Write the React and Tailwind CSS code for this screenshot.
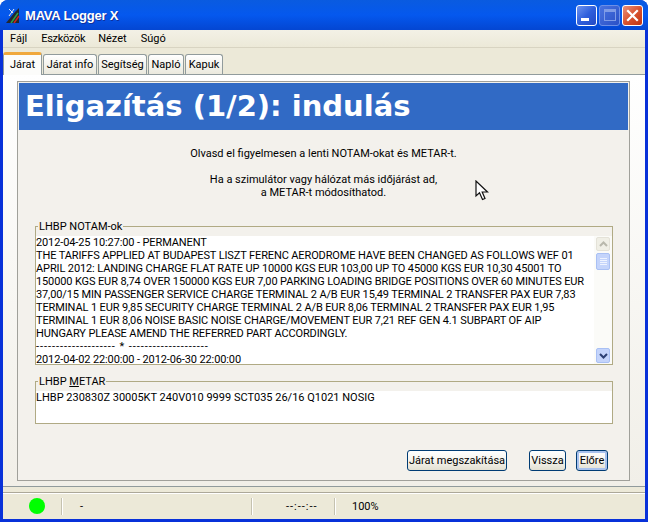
import React from 'react';

const notam = [
  '2012-04-25 10:27:00 - PERMANENT',
  'THE TARIFFS APPLIED AT BUDAPEST LISZT FERENC AERODROME HAVE BEEN CHANGED AS FOLLOWS WEF 01',
  'APRIL 2012: LANDING CHARGE FLAT RATE UP 10000 KGS EUR 103,00 UP TO 45000 KGS EUR 10,30 45001 TO',
  '150000 KGS EUR 8,74 OVER 150000 KGS EUR 7,00 PARKING LOADING BRIDGE POSITIONS OVER 60 MINUTES EUR',
  '37,00/15 MIN PASSENGER SERVICE CHARGE TERMINAL 2 A/B EUR 15,49 TERMINAL 2 TRANSFER PAX EUR 7,83',
  'TERMINAL 1 EUR 9,85 SECURITY CHARGE TERMINAL 2 A/B EUR 8,06 TERMINAL 2 TRANSFER PAX EUR 1,95',
  'TERMINAL 1 EUR 8,06 NOISE BASIC NOISE CHARGE/MOVEMENT EUR 7,21 REF GEN 4.1 SUBPART OF AIP',
  'HUNGARY PLEASE AMEND THE REFERRED PART ACCORDINGLY.',
];

const tabs = ['Járat info', 'Segítség', 'Napló', 'Kapuk'];
const tabWidths = ['w-[54px]', 'w-[49px]', 'w-[36px]', 'w-[38px]'];

const XpButton = ({ children, className = '' }) => (
  <button
    type="button"
    className={`h-[21px] rounded-[3px] border border-[#003c74] bg-gradient-to-b from-white via-[#f5f4ee] to-[#e3e0d2] text-center leading-[18px] ${className}`}
  >
    {children}
  </button>
);

const AppIcon = () => (
  <svg width="15" height="17" viewBox="0 0 15 17" className="mr-[5px]">
    <path d="M1 16 L10 5 L14 1 L14 16 Z" fill="#23262e" />
    <path d="M6 16 L13 6" fill="none" stroke="#2e9e4a" strokeWidth="1.5" />
    <path d="M9 16 L14 9" fill="none" stroke="#c8281e" strokeWidth="1.5" />
    <path d="M9 2 L4 9 M4 2 L8 6" fill="none" stroke="#e6e9f6" strokeWidth="1" />
  </svg>
);

const WindowButtons = () => (
  <div className="flex items-center gap-[2px]">
    <div className="flex h-[21px] w-[21px] items-end rounded-[3px] border border-white bg-gradient-to-br from-[#6f93ef] via-[#2f5fdc] to-[#2349c4] pb-[4px] pl-[4px]">
      <div className="h-[3px] w-[8px] bg-white" />
    </div>
    <div className="flex h-[21px] w-[21px] items-center justify-center rounded-[3px] border border-[#6d8fe6] bg-gradient-to-br from-[#4a73e0] to-[#2a50c6]">
      <div className="h-[12px] w-[12px] border border-t-[3px] border-[#7f9be6]" />
    </div>
    <div className="flex h-[21px] w-[21px] items-center justify-center rounded-[3px] border border-white bg-gradient-to-br from-[#e8907a] via-[#d9532f] to-[#c0330f]">
      <svg width="13" height="13" viewBox="0 0 13 13">
        <path d="M2 2 L11 11 M11 2 L2 11" stroke="#fff" strokeWidth="2.2" strokeLinecap="square" />
      </svg>
    </div>
  </div>
);

const ScrollBar = () => (
  <div className="flex w-[18px] shrink-0 flex-col items-center justify-between bg-[#fbfbf8] py-px">
    <div className="flex w-full flex-col items-center">
      <div className="flex h-[14px] w-[14px] items-center justify-center rounded-[2px] border border-[#e4e2d8] bg-[#f0efe6]">
        <svg width="9" height="6" viewBox="0 0 9 6">
          <path d="M1 5 L4.5 1.5 L8 5" fill="none" stroke="#b9b8ac" strokeWidth="2" />
        </svg>
      </div>
      <div className="mt-[2px] flex h-[17px] w-[14px] flex-col items-center justify-center gap-px rounded-[2px] border border-[#a9c0f4] bg-[#c4d4fb]">
        <div className="h-px w-[7px] bg-[#eef3ff]" />
        <div className="h-px w-[7px] bg-[#eef3ff]" />
        <div className="h-px w-[7px] bg-[#eef3ff]" />
        <div className="h-px w-[7px] bg-[#eef3ff]" />
      </div>
    </div>
    <div className="flex h-[15px] w-[14px] items-center justify-center rounded-[2px] border border-[#a9c0f4] bg-[#c4d4fb]">
      <svg width="9" height="6" viewBox="0 0 9 6">
        <path d="M1 1 L4.5 4.5 L8 1" fill="none" stroke="#2c3f73" strokeWidth="2" />
      </svg>
    </div>
  </div>
);

export default function App() {
  return (
    <div className="relative flex h-[522px] w-[648px] flex-col overflow-hidden rounded-t-[8px] bg-[#0831d9] font-['Roboto',sans-serif] text-[11px] leading-[13px] text-black">
      {/* title bar */}
      <div className="flex h-[30px] shrink-0 items-center bg-gradient-to-b from-[#0a5be0] via-[#0558ee] to-[#0446d2] px-[5px]">
        <AppIcon />
        <span className="flex-1 pt-px font-['Liberation_Sans',sans-serif] text-[13px] font-bold tracking-[-0.2px] text-white [text-shadow:1px_1px_#0f2f9c]">MAVA Logger X</span>
        <WindowButtons />
      </div>

      <div className="mx-[3px] mb-[3px] flex min-h-0 flex-1 flex-col bg-[#ece9d8]">
        {/* menu */}
        <div className="flex h-[18px] shrink-0 items-center border-b border-[#d8d4c2] bg-gradient-to-b from-[#f3f1e6] to-[#ece9d8] pl-[7px]">
          <span>Fájl</span>
          <span className="ml-[14px] tracking-[-0.3px]">Eszközök</span>
          <span className="ml-[13px]">Nézet</span>
          <span className="ml-[14px]">Súgó</span>
        </div>

        {/* tabs */}
        <div className="mt-[4px] flex h-[22px] shrink-0 items-end">
          <div className="z-10 -mb-px flex h-[23px] w-[39px] items-center justify-center rounded-t-[3px] border-x border-[#919b9c] border-t-[3px] border-t-[#f0a83c] bg-[#fcfcfa] pb-[2px]">
            Járat
          </div>
          {tabs.map((tab, i) => (
            <div key={tab} className={`ml-px flex h-[20px] items-center justify-center rounded-t-[3px] border-x border-t border-[#919b9c] bg-gradient-to-b from-white to-[#ebe9dd] ${tabWidths[i]}`}>
              {tab}
            </div>
          ))}
        </div>

        {/* tab pane */}
        <div className="flex h-[413px] shrink-0 flex-col border-y border-y-[#919b9c] bg-gradient-to-b from-white to-[#f1efe8] pb-[5px] pl-[14px] pr-[15px] pt-[6px]">
          <div className="flex min-h-0 flex-1 flex-col border border-[#a0a09a] bg-[#f3f1ec] p-px">
            <div className="flex h-[47px] shrink-0 items-center bg-[#316ac5] pl-[6px] font-['DejaVu_Sans',sans-serif] text-[29px] font-bold leading-none text-white">
              Eligazítás (1/2): indulás
            </div>

            <div className="mt-[17px] flex flex-col items-center">
              <p>Olvasd el figyelmesen a lenti NOTAM-okat és METAR-t.</p>
              <p className="mt-[13px]">Ha a szimulátor vagy hálózat más időjárást ad,</p>
              <p>a METAR-t módosíthatod.</p>
            </div>

            <fieldset className="ml-[16px] mt-[21px] h-[145px] w-[578px] shrink-0 border border-[#b0aa84] px-0 pb-0">
              <legend className="ml-[2px] px-px leading-[13px]">LHBP NOTAM-ok</legend>
              <div className="mt-[3px] flex h-[128px]">
                <div className="min-w-0 flex-1 whitespace-nowrap bg-white tracking-[-0.12px]">
                  {notam.map((line) => (
                    <div key={line}>{line}</div>
                  ))}
                  <div className="tracking-[0.95px]">-------------------- * --------------------</div>
                  <div className="h-[10px]">2012-04-02 22:00:00 - 2012-06-30 22:00:00</div>
                </div>
                <ScrollBar />
              </div>
            </fieldset>

            <fieldset className="ml-[16px] mt-[10px] h-[49px] w-[578px] shrink-0 border border-[#b0aa84] px-0 pb-0">
              <legend className="ml-[2px] px-px leading-[13px]">LHBP <span className="underline">M</span>ETAR</legend>
              <div className="mt-[3px] h-[32px] bg-white">LHBP 230830Z 30005KT 240V010 9999 SCT035 26/16 Q1021 NOSIG</div>
            </fieldset>

            <div className="ml-[388px] mt-[26px] flex shrink-0">
              <XpButton className="w-[100px]">Járat megszakítása</XpButton>
              <XpButton className="ml-[22px] w-[37px]">Vissza</XpButton>
              <XpButton className="ml-[10px] w-[32px] shadow-[inset_0_0_0_2px_#a9c2ee]">Előre</XpButton>
            </div>
          </div>
        </div>

        {/* status bar */}
        <div className="mt-[5px] flex flex-1 items-center border-t border-[#aca899] bg-[#ece9d8] shadow-[inset_0_1px_#fff]">
          <div className="ml-[26px] h-[16px] w-[16px] rounded-full bg-[#00ff00]" />
          <div className="ml-[16px] h-[17px] w-[2px] border-l border-[#c5c2b0] bg-white" />
          <span className="ml-[17px] w-[171px]">-</span>
          <div className="h-[17px] w-[2px] border-l border-[#c5c2b0] bg-white" />
          <span className="w-[81px] pl-[33px] tracking-[1px]">--:--:--</span>
          <div className="h-[17px] w-[2px] border-l border-[#c5c2b0] bg-white" />
          <span className="ml-[16px]">100%</span>
        </div>
      </div>

      {/* mouse pointer from the capture */}
      <svg className="absolute left-[475px] top-[180px]" width="15" height="22" viewBox="0 0 15 22">
        <path d="M1 1 L1 16 L4.5 12.8 L7.5 19.5 L10 18.5 L7.2 12 L12.5 12 Z" fill="#fff" stroke="#111" strokeWidth="1.2" />
      </svg>
    </div>
  );
}
